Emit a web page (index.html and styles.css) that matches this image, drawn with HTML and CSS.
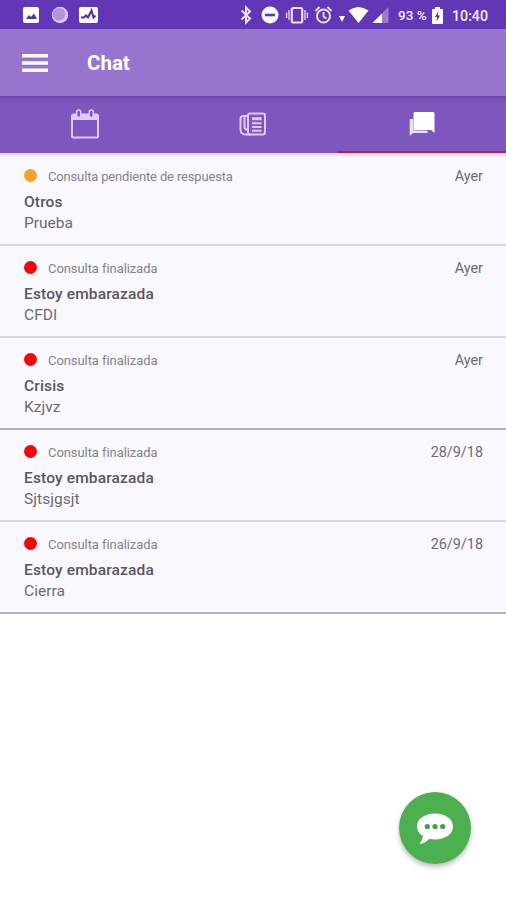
FILE: index.html
```html
<!DOCTYPE html>
<html lang="es">
<head>
<meta charset="utf-8">
<title>Chat</title>
<link rel="stylesheet" href="styles.css">
</head>
<body>
<div class="app">
  <header class="status">
    <svg class="notices" width="78" height="18" viewBox="0 0 78 18">
      <rect x="0" y="1" width="16" height="16" rx="2" fill="#fff"/>
      <path d="M3 13l3-4 2 2 3-3.500 3 5.500z" fill="#5630a3"/>
      <circle cx="37" cy="9" r="8.200" fill="#d9c7f0"/>
      <circle cx="36" cy="8.200" r="6.300" fill="#b396da"/>
      <rect x="56" y="1" width="19" height="16" rx="2" fill="#fff"/>
      <path d="M58 11.500h3l2-2 2 2 3.500-7 2 7 2-2" fill="none" stroke="#5630a3" stroke-width="2"/>
    </svg>
    <svg class="system" width="150" height="20" viewBox="240 5 150 20">
      <path d="M241.500 10.500l8.500 8-4 4v-15l4 4-8.500 8" fill="none" stroke="#eadff8" stroke-width="2"/>
      <circle cx="270" cy="15" r="8.500" fill="#fff"/>
      <rect x="265" y="13.700" width="10" height="2.600" fill="#6237b5"/>
      <rect x="291.800" y="8" width="10.400" height="14.500" rx="1.500" fill="none" stroke="#eadff8" stroke-width="2.200"/>
      <path d="M289 10v10M286.600 12.500v5.500M305 10v10M307.400 12.500v5.500" stroke="#d9c7f0" stroke-width="1.500"/>
      <g fill="none" stroke="#eadff8" stroke-width="2">
        <circle cx="323.500" cy="16" r="6.500"/>
        <path d="M323.500 12v4.500l3 2M315.500 11l4-4M331.500 11l-4-4" stroke-width="1.800"/>
      </g>
      <path d="M339 16h6l-3 6z" fill="#fff"/>
      <path d="M348.500 10.500q10-7 20 0L358.500 23z" fill="#fff"/>
      <path d="M388.500 7v16h-16z" fill="#9c7ad0"/>
      <path d="M382 13.500v9.500h-9.500z" fill="#fff"/>
    </svg>
    <span class="percent">93 %</span>
    <svg class="battery" width="11" height="17" viewBox="0 0 11 17">
      <path d="M3 0h5v2h2q1 0 1 1v13q0 1-1 1H1q-1 0-1-1V3q0-1 1-1h2z" fill="#fff"/>
      <path d="M6.500 4L3 10h2.200L4.500 14.500 8 8.500H5.900z" fill="#5630a3"/>
    </svg>
    <span class="clock">10:40</span>
  </header>

  <div class="toolbar">
    <svg width="26" height="18" viewBox="0 0 26 18"><path d="M0 1.700h26M0 9h26M0 16.300h26" stroke="#fff" stroke-width="3.400"/></svg>
    <h1>Chat</h1>
  </div>

  <nav class="tabs">
    <a class="tab">
      <svg width="30" height="32" viewBox="0 0 30 32">
        <path d="M2 7h26v5H2z" fill="#dfc9f8"/>
        <rect x="2" y="6.500" width="26" height="23" rx="1.500" fill="none" stroke="#dfc9f8" stroke-width="2"/>
        <rect x="6.700" y="2" width="4" height="7.500" rx="2" fill="#7853b7" stroke="#dfc9f8" stroke-width="1.600"/>
        <rect x="19.300" y="2" width="4" height="7.500" rx="2" fill="#7853b7" stroke="#dfc9f8" stroke-width="1.600"/>
      </svg>
    </a>
    <a class="tab">
      <svg width="28" height="24" viewBox="0 0 28 24">
        <g fill="none" stroke="#dfc9f8" stroke-width="2">
          <rect x="9" y="1.500" width="17" height="21" rx="2"/>
          <path d="M9 4H4Q1.500 4 1.500 7v10q0 5.500 5 5.500H11M5.500 4v11q0 2.500 3.500 3M13 11.200h9.500M13 15h9.500M13 18.800h9.500"/>
        </g>
        <path d="M13 5.200h9.500v3H13z" fill="#dfc9f8"/>
      </svg>
    </a>
    <a class="tab active">
      <svg width="26" height="26" viewBox="0 0 26 26">
        <path d="M.7 8h5v12h13v2H4L.7 25z" fill="#eadff8"/>
        <path d="M6 1h18q1.500 0 1.500 1.500V22l-3.500-3H6q-1.500 0-1.500-1.500v-15Q4.500 1 6 1z" fill="#fff"/>
        <path d="M4.500 8v11.300H18" fill="none" stroke="#c6b2df" stroke-width="1"/>
      </svg>
    </a>
  </nav>

  <main class="list">
    <article class="row">
      <div class="meta"><i class="dot pending"></i><span class="state long">Consulta pendiente de respuesta</span><time>Ayer</time></div>
      <h2>Otros</h2><p>Prueba</p>
    </article>
    <article class="row">
      <div class="meta"><i class="dot"></i><span class="state">Consulta finalizada</span><time>Ayer</time></div>
      <h2>Estoy embarazada</h2><p>CFDI</p>
    </article>
    <article class="row dark">
      <div class="meta"><i class="dot"></i><span class="state">Consulta finalizada</span><time>Ayer</time></div>
      <h2>Crisis</h2><p>Kzjvz</p>
    </article>
    <article class="row">
      <div class="meta"><i class="dot"></i><span class="state">Consulta finalizada</span><time>28/9/18</time></div>
      <h2>Estoy embarazada</h2><p>Sjtsjgsjt</p>
    </article>
    <article class="row dark">
      <div class="meta"><i class="dot"></i><span class="state">Consulta finalizada</span><time>26/9/18</time></div>
      <h2>Estoy embarazada</h2><p>Cierra</p>
    </article>
  </main>

  <button class="fab" aria-label="Nuevo chat">
    <svg width="38" height="34" viewBox="0 0 38 34">
      <path d="M19 1.500c10.500 0 18 5.500 18 13s-7.500 13-18 13q-3 0-5.500-.7Q9 31.500 3.500 32q3-3.500 3.500-8Q1 20.500 1 14.500c0-7.500 7.500-13 18-13z" fill="#fff"/>
      <circle cx="11.300" cy="14.500" r="2.600" fill="#43a047"/><circle cx="19" cy="14.500" r="2.600" fill="#43a047"/><circle cx="26.700" cy="14.500" r="2.600" fill="#43a047"/>
    </svg>
  </button>
</div>
</body>
</html>
```
FILE: styles.css
```css
* { box-sizing: border-box; }
body { margin: 0; font-family: Roboto, sans-serif; background: #fff; }
.app { position: relative; width: 506px; height: 900px; overflow: hidden; }
.status { display: flex; align-items: center; height: 29px; background: #6237b5; color: #f4edfc; font-size: 14px; font-weight: 500; white-space: nowrap; }
.notices { margin-left: 23px; }
.system { margin-left: 139px; }
.percent { width: 34px; margin-left: 8px; font-size: 13.500px; line-height: 30px; }
.battery { margin-top: 2px; }
.clock { margin-left: 9px; padding-top: 2px; font-size: 14.200px; line-height: 30px; }
.toolbar { display: flex; align-items: center; height: 67px; padding: 0 22px; background: #9775ce; color: #fff; }
.toolbar h1 { margin: 1px 0 0 39px; font-size: 20.500px; font-weight: 700; }
.tabs { display: grid; grid-template-columns: repeat(3, 1fr); height: 57px; background: linear-gradient(#6944a8, #7853b7 4px, #7d57be 9px); }
.tab { display: flex; align-items: center; justify-content: center; padding: 1px 0 0 1px; border-bottom: 2px solid transparent; }
.active { border-color: #b51f50; }
.list { background: linear-gradient(#d9d4df, #faf8ff 5px); }
.row { height: 92px; padding: 13px 23px 0 24px; border-bottom: 2px solid #d8d6dc; color: #6c6a70; }
.row.dark { border-color: #b5b3b8; }
.meta { display: flex; align-items: center; height: 20px; }
.dot { width: 13px; height: 13px; margin-top: -1px; border-radius: 50%; background: #f50505; }
.pending { background: #f5a21d; }
.state { margin-left: 11px; font-size: 13px; letter-spacing: -0.070px; color: #858389; }
.state.long { letter-spacing: -0.160px; }
.meta time { margin-left: auto; font-size: 14.400px; }
.row h2 { margin: 6px 0 0; font-size: 15.500px; letter-spacing: 0.150px; line-height: 20px; font-weight: 500; color: #59575d; }
.row p { margin: 1px 0 0; font-size: 15.500px; line-height: 20px; }
.row:not(:first-child) p { letter-spacing: 0.050px; }
.list { padding-top: 1px; }
.tabs { height: 57px; }
.fab { position: absolute; left: 399px; top: 792px; width: 72px; height: 72px; display: flex; align-items: center; justify-content: center; padding: 2px 0 0; border: 0; border-radius: 50%; background: #4caf50; box-shadow: 0 3px 5px #0004; }
.row { padding-top: 12px; }
```
